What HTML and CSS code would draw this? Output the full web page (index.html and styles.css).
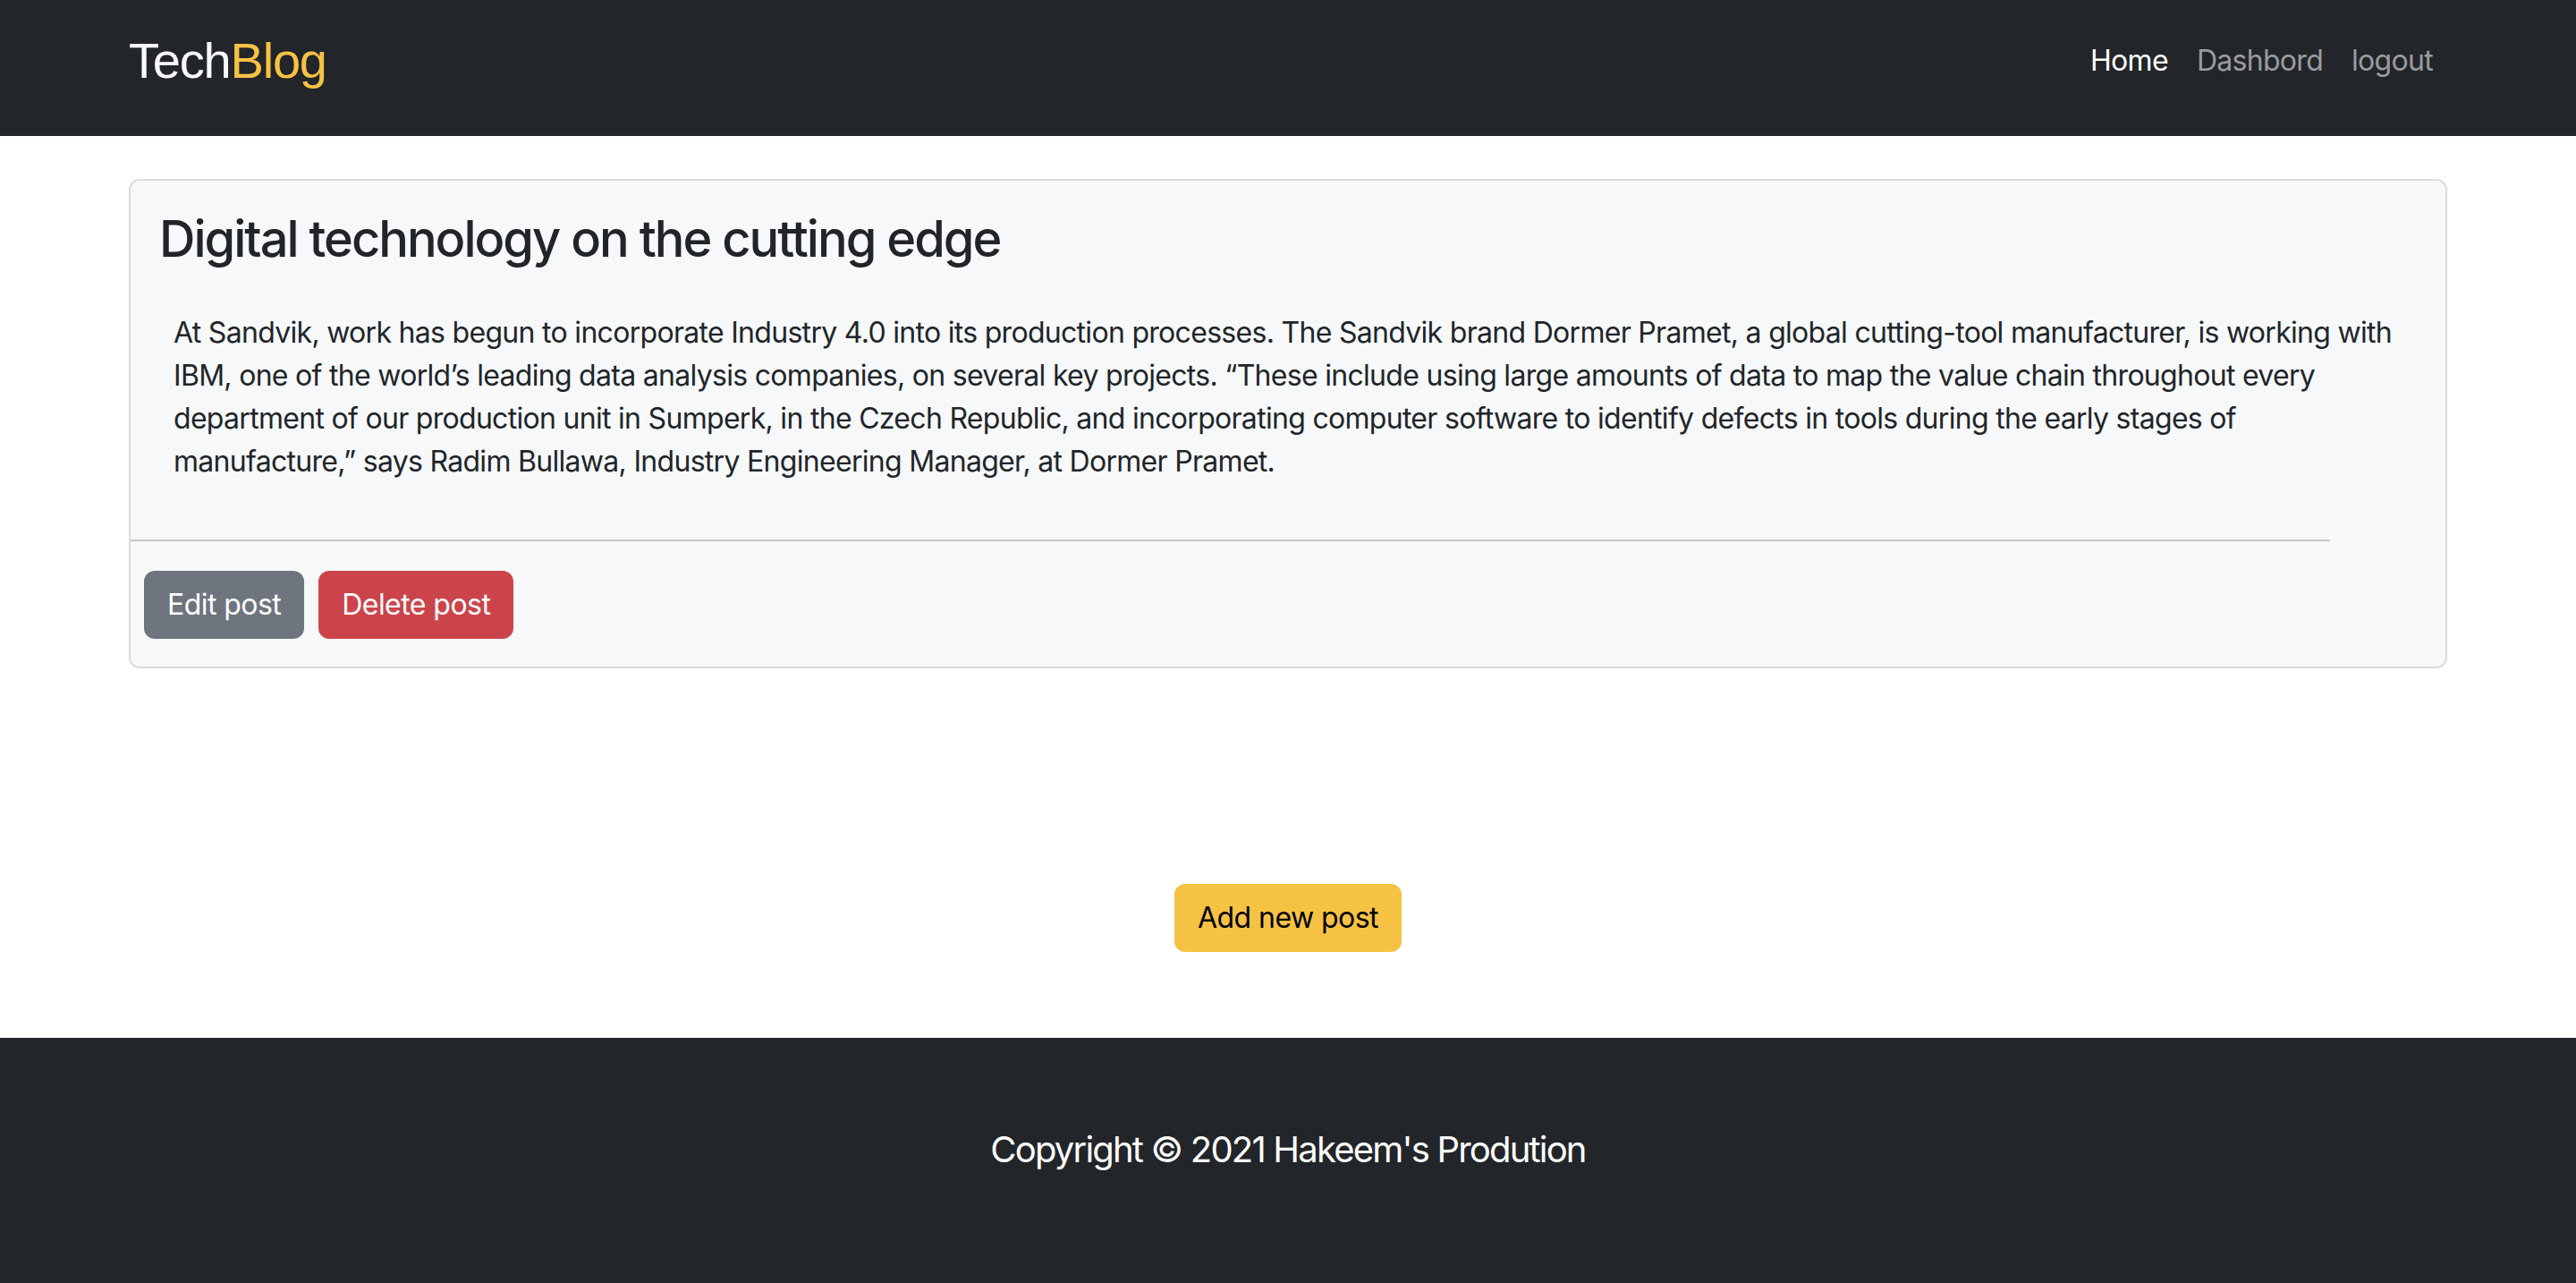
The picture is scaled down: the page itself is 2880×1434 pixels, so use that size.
FILE: index.html
```html
<!DOCTYPE html>
<html lang="en">
<head>
<meta charset="utf-8">
<title>TechBlog</title>
<link rel="stylesheet" href="styles.css">
</head>
<body>
<nav class="navbar">
  <div class="container nav-inner">
    <a class="brand" href="#"><span class="brand-tech">Tech</span><span class="brand-blog">Blog</span></a>
    <ul class="nav-links">
      <li><a class="nav-link active" href="#">Home</a></li>
      <li><a class="nav-link" href="#">Dashbord</a></li>
      <li><a class="nav-link" href="#">logout</a></li>
    </ul>
  </div>
</nav>
<main class="container main">
  <article class="card">
    <div class="card-body">
      <h3 class="card-title">Digital technology on the cutting edge</h3>
      <p class="card-text">At Sandvik, work has begun to incorporate Industry 4.0 into its production processes. The Sandvik brand Dormer Pramet, a global cutting-tool manufacturer, is working with IBM, one of the world’s leading data analysis companies, on several key projects. “These include using large amounts of data to map the value chain throughout every department of our production unit in Sumperk, in the Czech Republic, and incorporating computer software to identify defects in tools during the early stages of manufacture,” says Radim Bullawa, Industry Engineering Manager, at Dormer Pramet.</p>
    </div>
    <hr class="card-rule">
    <div class="card-actions">
      <a class="btn btn-secondary" href="#">Edit post</a>
      <a class="btn btn-danger" href="#">Delete post</a>
    </div>
  </article>
  <div class="add-row">
    <a class="btn btn-warning" href="#">Add new post</a>
  </div>
</main>
<footer class="footer">
  <p class="footer-text">Copyright © 2021 Hakeem's Prodution</p>
</footer>
</body>
</html>
```
FILE: styles.css
```css
* { box-sizing: border-box; }
html, body { margin: 0; padding: 0; }
body {
  font-family: Inter, "Noto Sans", sans-serif;
  font-size: 32px;
  line-height: 1.5;
  color: #212529;
  background: #fff;
}
a { text-decoration: none; }

.container {
  width: 2592px;
  margin: 0 auto;
}

/* Navbar */
.navbar {
  background: #222529;
  height: 152px;
  padding-top: 26px;
}
.nav-inner {
  display: flex;
  align-items: center;
  justify-content: space-between;
  height: 84px;
}
.brand {
  font-family: "Liberation Sans", Arial, sans-serif;
  font-size: 56px;
  line-height: 84px;
  letter-spacing: -1.2px;
  white-space: nowrap;
}
.brand-tech { color: #f8f9fa; }
.brand-blog { color: #f6c244; }
.nav-links {
  display: flex;
  list-style: none;
  margin: 0;
  padding: 0;
}
.nav-link {
  display: block;
  padding: 16px 16px;
  font-size: 32px;
  line-height: 48px;
  letter-spacing: -0.7px;
  color: #9a9c9f;
}
.nav-link.active { color: #fff; }

/* Card */
.main { padding-top: 48px; }
.card {
  background: #f7f8fa;
  border: 2px solid #dadcde;
  border-radius: 12px;
}
.card-body {
  padding: 32px 32px 31px;
}
.card-title {
  margin: 0 0 16px;
  font-size: 56px;
  font-weight: 500;
  line-height: 1.2;
  letter-spacing: -2px;
}
.card-text {
  margin: 0 0 32px;
  padding: 31px 16px 0;
  font-size: 32px;
  line-height: 48px;
  letter-spacing: -0.7px;
}
.card-rule {
  width: 95%;
  margin: 0;
  border: 0;
  border-top: 2px solid #c6c8ca;
}
.card-actions {
  display: flex;
  gap: 16px;
  padding: 33px 15px 31px;
}

/* Buttons */
.btn {
  display: inline-block;
  padding: 12px 24px;
  border: 2px solid transparent;
  border-radius: 12px;
  font-size: 32px;
  line-height: 48px;
  letter-spacing: -0.55px;
  color: #fff;
  white-space: nowrap;
}
.btn-secondary { background: #6e757e; border-color: #6e757e; }
.btn-danger { background: #cc444b; border-color: #cc444b; }
.btn-warning { background: #f6c244; border-color: #f6c244; color: #000; }

.add-row {
  display: flex;
  justify-content: center;
  padding: 241px 0 96px;
}

/* Footer */
.footer {
  background: #222529;
  padding: 95px 0 120px;
  text-align: center;
}
.footer-text {
  margin: 0;
  color: #fff;
  font-size: 40px;
  line-height: 60px;
  letter-spacing: -1.8px;
}
```
